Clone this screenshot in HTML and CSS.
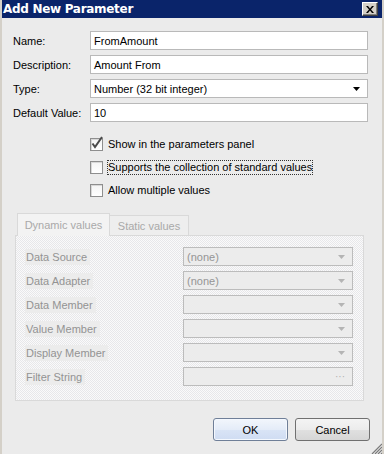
FILE: index.html
```html
<!DOCTYPE html>
<html>
<head>
<meta charset="utf-8">
<link rel="stylesheet" href="styles.css">
</head>
<body>
<div class="window">
  <div class="titlebar">
    <span class="title">Add New Parameter</span>
    <span class="close"><svg width="8" height="7" viewBox="0 0 8 7"><path d="M0 0h2l2 2.5L6 0h2L5 3.5 8 7H6L4 4.5 2 7H0l3-3.5z" fill="#000"/></svg></span>
  </div>
  <div class="client">
    <div class="fields">
      <label class="lbl">Name:</label>
      <div class="input">FromAmount</div>
      <label class="lbl">Description:</label>
      <div class="input">Amount From</div>
      <label class="lbl">Type:</label>
      <div class="input select"><span>Number (32 bit integer)</span><svg class="arrow" width="7" height="4" viewBox="0 0 7 4"><path d="M0 0h7L3.5 4z" fill="#000"/></svg></div>
      <label class="lbl">Default Value:</label>
      <div class="input">10</div>
    </div>
    <div class="checks">
      <div class="check"><span class="box"><svg class="tick" width="14" height="14" viewBox="0 0 14 14"><path d="M2.5 7.5 5 11l7-10" fill="none" stroke="#4a4a4a" stroke-width="2"/></svg></span><span class="ctext">Show in the parameters panel</span></div>
      <div class="check"><span class="box"></span><span class="ctext focus">Supports the collection of standard values</span></div>
      <div class="check"><span class="box"></span><span class="ctext">Allow multiple values</span></div>
    </div>
    <div class="tabs">
      <div class="tabstrip">
        <div class="tab active">Dynamic values</div>
        <div class="tab">Static values</div>
      </div>
      <div class="panel">
        <span class="plbl">Data Source</span>
        <div class="combo"><span>(none)</span><svg width="7" height="4" viewBox="0 0 7 4"><path d="M0 0h7L3.5 4z" fill="#b4b4b4"/></svg></div>
        <span class="plbl">Data Adapter</span>
        <div class="combo"><span>(none)</span><svg width="7" height="4" viewBox="0 0 7 4"><path d="M0 0h7L3.5 4z" fill="#b4b4b4"/></svg></div>
        <span class="plbl">Data Member</span>
        <div class="combo"><span></span><svg width="7" height="4" viewBox="0 0 7 4"><path d="M0 0h7L3.5 4z" fill="#b4b4b4"/></svg></div>
        <span class="plbl">Value Member</span>
        <div class="combo"><span></span><svg width="7" height="4" viewBox="0 0 7 4"><path d="M0 0h7L3.5 4z" fill="#b4b4b4"/></svg></div>
        <span class="plbl">Display Member</span>
        <div class="combo"><span></span><svg width="7" height="4" viewBox="0 0 7 4"><path d="M0 0h7L3.5 4z" fill="#b4b4b4"/></svg></div>
        <span class="plbl">Filter String</span>
        <div class="combo"><span></span><span class="dots">···</span></div>
      </div>
    </div>
    <div class="buttons">
      <button class="btn default">OK</button>
      <button class="btn">Cancel</button>
    </div>
    <svg class="grip" width="11" height="11" viewBox="0 0 11 11"><path d="M11 1 1 11M11 4 4 11M11 7 7 11M11 10 10 11" stroke="#7a7a7a" stroke-width="1.2"/></svg>
  </div>
</div>
</body>
</html>
```
FILE: styles.css
```css
* { box-sizing: border-box; }
html, body { margin: 0; padding: 0; }
body {
  width: 384px;
  height: 454px;
  overflow: hidden;
  font-family: "Liberation Sans", Arial, sans-serif;
  font-size: 11px;
  color: #000;
  background: #d4d0c8;
}
.window {
  width: 384px;
  height: 454px;
  padding: 0 2px;
  background: #d4d0c8;
  display: flex;
  flex-direction: column;
}
.titlebar {
  height: 18px;
  background: #0a246a;
  display: flex;
  align-items: center;
  justify-content: space-between;
  padding: 0 4px 0 1px;
}
.title {
  color: #fff;
  font-weight: bold;
  font-size: 12px;
  font-family: "DejaVu Sans", sans-serif;
  letter-spacing: -0.3px;
}
.close {
  width: 16px;
  height: 14px;
  background: #d4d0c8;
  border-top: 1px solid #fff;
  border-left: 1px solid #fff;
  border-right: 1px solid #404040;
  border-bottom: 1px solid #404040;
  box-shadow: inset -1px -1px 0 #808080;
  display: flex;
  align-items: center;
  justify-content: center;
}
.client {
  position: relative;
  flex: 1;
  background: #ebebeb;
  display: flex;
  flex-direction: column;
}
.fields {
  display: grid;
  grid-template-columns: 77px 278px;
  row-gap: 5px;
  padding: 13px 0 0 11px;
}
.lbl {
  display: flex;
  align-items: center;
  height: 19px;
}
.input {
  height: 19px;
  border: 1px solid #b9b9b9;
  background: #fff;
  display: flex;
  align-items: center;
  justify-content: space-between;
  padding: 0 7px 0 3px;
}
.checks {
  display: flex;
  flex-direction: column;
  gap: 10px;
  padding: 16px 0 0 88px;
}
.check {
  display: flex;
  align-items: center;
  height: 13px;
  gap: 5px;
}
.box {
  position: relative;
  width: 13px;
  height: 13px;
  border: 1px solid #8e8e8e;
  background: linear-gradient(#f4f4f4, #fff);
  box-shadow: inset 1px 1px 0 #d8d8d8;
}
.tick {
  position: absolute;
  left: -1px;
  top: -3px;
}
.ctext { line-height: 13px; white-space: nowrap; }
.focus { outline: 1px dotted #333; outline-offset: 0; }
.tabs {
  margin: 16px 18px 0 13px;
}
.tabstrip {
  display: flex;
  align-items: flex-end;
  padding-left: 2px;
  height: 22px;
}
.tab {
  color: #a9a9a9;
  white-space: nowrap;
  border: 1px solid #d9d9d9;
  border-bottom: none;
  background: #eeeeee;
  width: 79px;
  height: 20px;
  display: flex;
  align-items: center;
  justify-content: center;
}
.tab.active {
  width: 93px;
  height: 23px;
  margin-bottom: -1px;
  background: #f3f3f3;
  position: relative;
  z-index: 1;
}
.tab:not(.active) { border-left: none; }
.panel {
  border: 1px solid #d9d9d9;
  background-color: #ececee;
  background-image: repeating-conic-gradient(#fafafa 0 25%, #e7e7ea 0 50%);
  background-size: 2px 2px;
  display: grid;
  grid-template-columns: 158px 170px;
  row-gap: 5px;
  padding: 11px 0 14px 9px;
  height: 166px;
}
.plbl {
  justify-self: start;
  align-self: center;
  background: #ececec;
  color: #939393;
  height: 16px;
  line-height: 16px;
  padding: 0 3px 0 1px;
}
.combo {
  height: 19px;
  border: 1px solid #bcbcbc;
  background: #ececec;
  color: #959595;
  display: flex;
  align-items: center;
  justify-content: space-between;
  padding: 0 7px 0 3px;
}
.dots { color: #b0b0b0; font-size: 10px; letter-spacing: 0; }
.buttons {
  display: flex;
  justify-content: flex-end;
  gap: 7px;
  padding: 17px 12px 0 0;
}
.btn {
  font-family: "Liberation Sans", Arial, sans-serif;
  font-size: 11px;
  width: 75px;
  height: 23px;
  border: 1px solid #707070;
  border-radius: 3px;
  background: linear-gradient(#f4f4f4 0, #ececec 50%, #e0e0e0 51%, #d6d6d6 100%);
  color: #000;
  padding: 0;
}
.btn.default {
  border-color: #6f7f98;
  background: linear-gradient(#f2f6fc 0, #e4ecf8 50%, #d9e4f6 51%, #cfdcf2 100%);
  box-shadow: inset 0 0 0 1px #f4f8fe;
}
.grip {
  position: absolute;
  right: 0;
  bottom: 0;
}
```
